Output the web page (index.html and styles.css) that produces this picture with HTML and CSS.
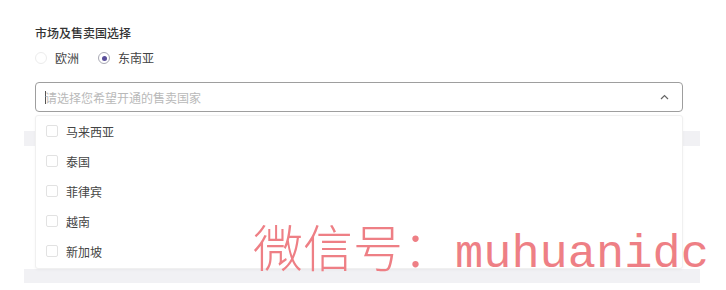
FILE: index.html
```html
<!DOCTYPE html>
<html lang="zh">
<head>
<meta charset="utf-8">
<link rel="stylesheet" href="styles.css">
</head>
<body>
<div class="page">
  <div class="form">
    <div class="label">市场及售卖国选择</div>
    <div class="radios">
      <label class="radio"><span class="dot"></span><span>欧洲</span></label>
      <label class="radio checked"><span class="dot"></span><span>东南亚</span></label>
    </div>
    <div class="select">
      <div class="input">
        <span class="caret"></span>
        <span class="placeholder">请选择您希望开通的售卖国家</span>
        <svg class="chev" width="9" height="6" viewBox="0 0 9 6"><path d="M1 5 L4.5 1.5 L8 5" fill="none" stroke="#666" stroke-width="1.2"/></svg>
      </div>
      <div class="menu">
        <div class="item"><span class="box"></span>马来西亚</div>
        <div class="item"><span class="box"></span>泰国</div>
        <div class="item"><span class="box"></span>菲律宾</div>
        <div class="item"><span class="box"></span>越南</div>
        <div class="item"><span class="box"></span>新加坡</div>
      </div>
    </div>
  </div>
  <div class="table">
    <div class="thead"></div>
    <div class="tbody"></div>
    <div class="tfoot"></div>
  </div>
  <div class="watermark">微信号：<span class="wm-latin">muhuanidc</span></div>
</div>
</body>
</html>
```
FILE: styles.css
```css
* { box-sizing: border-box; }
html, body { margin: 0; padding: 0; background: #fff; }
body {
  font-family: "Noto Sans CJK SC", "Noto Sans", sans-serif;
  font-size: 12px;
  color: #333;
  width: 726px;
  height: 290px;
  overflow: hidden;
}
.page { position: relative; width: 726px; height: 290px; }
.form { padding: 25px 0 0 35px; width: 683px; }
.label { font-size: 12px; line-height: 16px; font-weight: 500; color: #333; }
.radios { display: flex; gap: 19px; margin-top: 10px; height: 14px; align-items: center; }
.radio { display: flex; align-items: center; gap: 8px; color: #444; line-height: 14px; }
.dot {
  width: 12px; height: 12px; border-radius: 50%;
  border: 1px solid #ececec; background: #fff;
  display: flex; align-items: center; justify-content: center;
}
.radio.checked .dot { border-color: #a9a9b4; }
.radio.checked .dot::after {
  content: ""; width: 5px; height: 5px; border-radius: 50%; background: #5a4f9a;
}
.select { position: relative; margin-top: 17px; }
.input {
  height: 30px; border: 1px solid #9e9e9e; border-radius: 4px;
  display: flex; align-items: center; padding-left: 9px; padding-right: 13px;
  background: #fff;
}
.caret { width: 1px; height: 13px; background: #555; margin-right: -1px; }
.placeholder { color: #b9b9b9; flex: 1; }
.chev { display: block; }
.menu {
  position: absolute; left: 0; right: 0; top: 33px; z-index: 2;
  background: #fff; border: 1px solid #f0f0f0; border-radius: 3px;
  padding: 0 0 2px;
  box-shadow: 0 1px 3px rgba(0,0,0,0.04);
}
.item {
  height: 30px; display: flex; align-items: center; gap: 8px;
  padding-left: 10px; color: #444;
}
.box {
  width: 12px; height: 12px; border: 1px solid #e2e2e2; border-radius: 2px; background: #fff;
}
.table { margin: 19px 0 0 24px; width: 676px; }
.thead { height: 15px; background: #f1f1f4; }
.tbody { height: 123px; background: #fff; }
.tfoot { height: 14px; background: #f1f1f4; }
.watermark {
  position: absolute; left: 253px; top: 213px; z-index: 5;
  font-family: "Noto Sans CJK SC", serif;
  font-size: 50px; line-height: 64px; color: #ee7f85; font-weight: 300;
  white-space: nowrap;
}
.wm-latin { font-family: "Liberation Mono", monospace; font-size: 47px; margin-left: 2px; }
```
